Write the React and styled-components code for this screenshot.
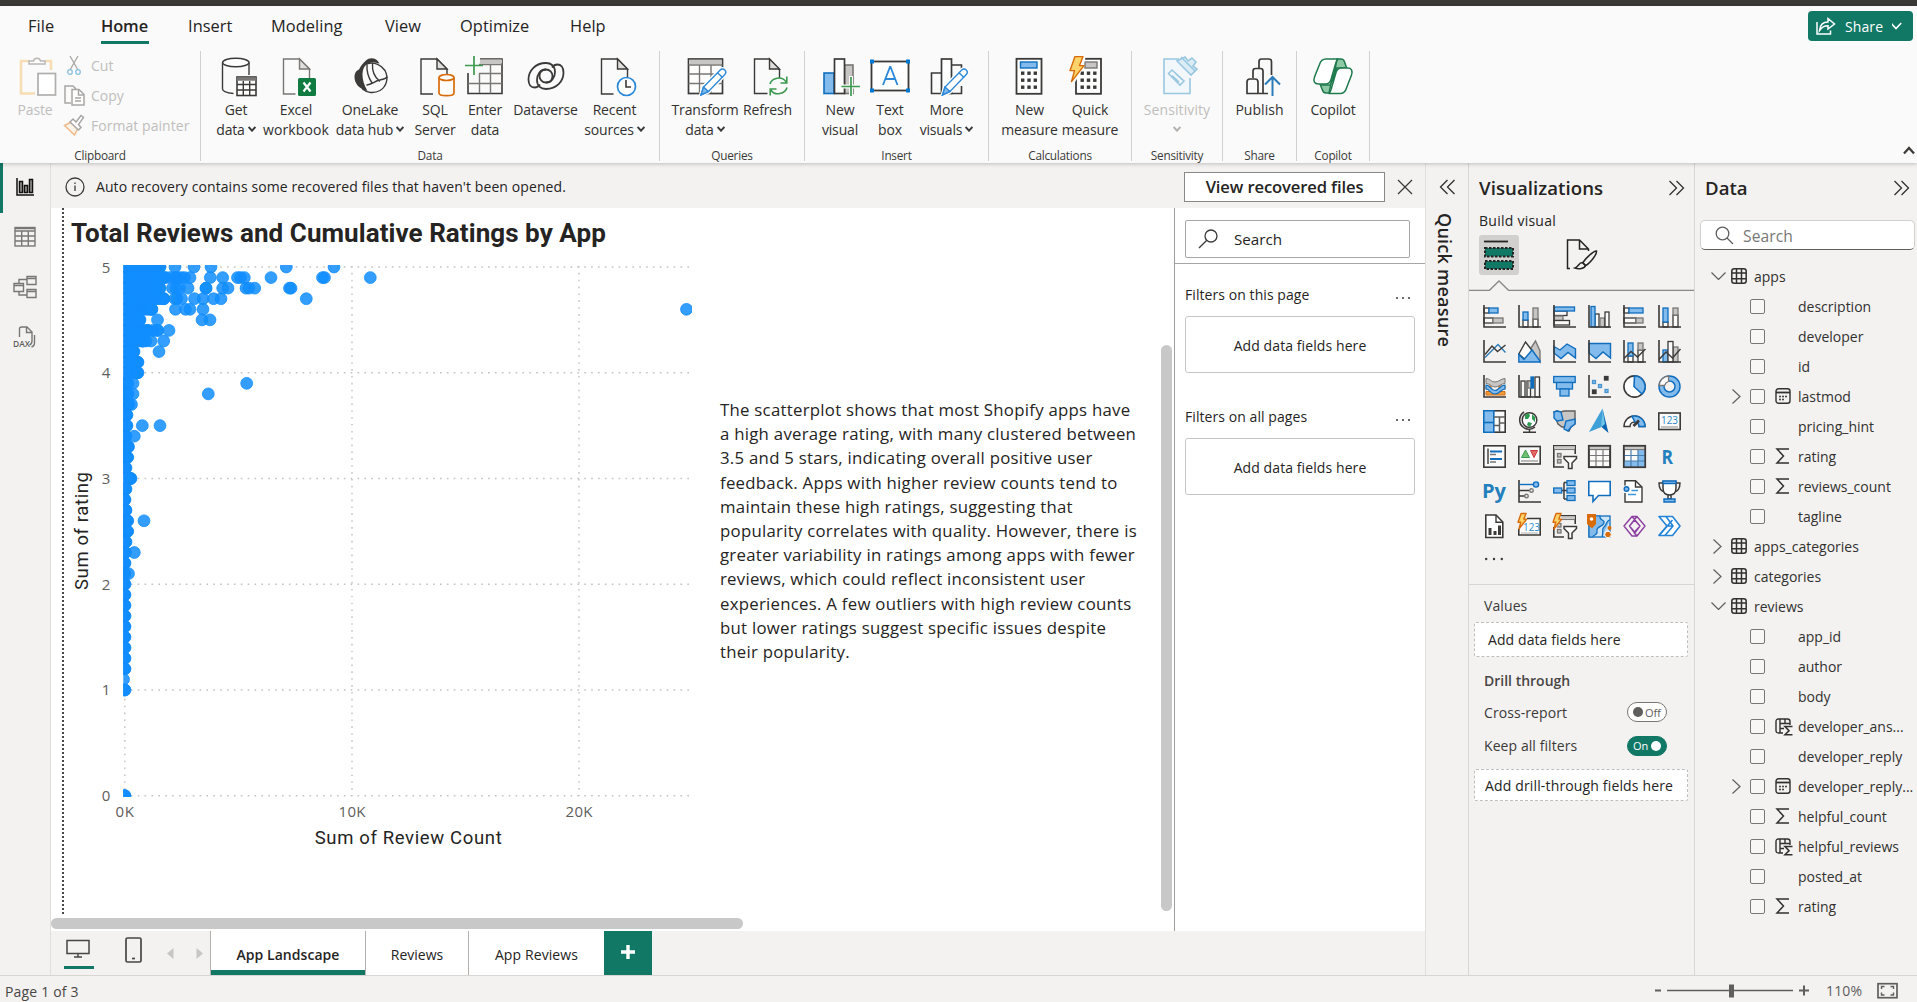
import React from "react";
import styled, { createGlobalStyle, css } from "styled-components";

const UI = `"Open Sans", "Noto Sans", sans-serif`;
const DIN = `Roboto, "Liberation Sans", sans-serif`;
const TEAL = "#117865";
const BG = "#f3f2f1";
const LINE = "#e1dfdd";
const INK = "#252423";
const D = "#3b3a39";
const M = "#797775";
const G = "#c8c6c4";
const W = "#fafafa";
const B = "#83bbec";
const S = "#106ebe";
const OR = "#d86b0a";
const GR = "#3d9a50";

const Global = createGlobalStyle`
  * { box-sizing: border-box; }
  html, body { margin: 0; height: 100%; overflow: hidden; }
  body { font-family: ${UI}; font-size: 14px; color: ${INK}; background: ${BG}; }
  button { font: inherit; color: inherit; background: none; border: 0; padding: 0; margin: 0; }
  svg { display: block; flex: none; }
`;

/* ---------- generic ---------- */

const Svg = ({ w, h, vb, children, ...rest }) => (
  <svg width={w} height={h || w} viewBox={vb || `0 0 ${w} ${h || w}`} fill="none" stroke={D} strokeWidth="1.4" {...rest}>
    {children}
  </svg>
);

const R = ({ x, y, w, h, f = W, s = D, sw = 1.3, rx }) => (
  <rect x={x} y={y} width={w} height={h} fill={f} stroke={s} strokeWidth={sw} rx={rx} />
);

const Text = styled.span`
  font-size: ${(p) => p.$size || 14}px;
  font-weight: ${(p) => p.$weight || 400};
  letter-spacing: ${(p) => p.$ls || 0}px;
  margin-left: ${(p) => p.$ml || 0}px;
  color: ${(p) => p.$color || INK};
  white-space: nowrap;
`;

const Page = styled.div`
  display: flex;
  flex-direction: column;
  height: 100vh;
  min-width: 1917px;
  background: ${BG};
`;

const TitleStrip = styled.div`
  height: 6px;
  flex: none;
  background: #3b3936;
`;

/* ---------- ribbon ---------- */

const Ribbon = styled.header`
  height: 157px;
  flex: none;
  background: #fafafa;
  box-shadow: 0 1px 4px rgba(0, 0, 0, 0.22);
  position: relative;
  z-index: 2;
`;

const MenuRow = styled.nav`
  display: flex;
  height: 45px;
  padding: 0 4px 0 28px;
`;

const MenuItem = styled.button`
  height: 38px;
  width: ${(p) => p.$w}px;
  margin-right: ${(p) => p.$gap}px;
  padding-top: 3px;
  font-size: 16.4px;
  letter-spacing: ${(p) => p.$ls || 0}px;
  font-weight: ${(p) => (p.$active ? 600 : 400)};
  white-space: nowrap;
  text-align: left;
  border-bottom: 3px solid ${(p) => (p.$active ? TEAL : "transparent")};
`;

const ShareButton = styled.button`
  display: flex;
  align-items: center;
  gap: 9px;
  margin: 5px 0 0 auto;
  width: 105px;
  height: 30px;
  padding-left: 8px;
  border-radius: 4px;
  background: ${TEAL};
  color: #fff;
`;

const GroupRow = styled.div`
  display: flex;
  height: 110px;
`;

const Group = styled.section`
  display: flex;
  flex-direction: column;
  width: ${(p) => p.$w}px;
  border-right: 1px solid #d2d0ce;
`;

const GroupBody = styled.div`
  display: flex;
  height: 94px;
  padding-left: ${(p) => p.$pad || 0}px;
  justify-content: ${(p) => (p.$center ? "center" : "flex-start")};
`;

const GroupLabel = styled.div`
  height: 16px;
  line-height: 20px;
  text-align: center;
  font-size: 11.8px;
  letter-spacing: -0.25px;
  color: #3b3a39;
`;

const BigButton = styled.button`
  display: flex;
  flex-direction: column;
  align-items: center;
  width: ${(p) => p.$w}px;
  padding-top: 5px;
`;

const BigLabel = styled.span`
  display: flex;
  align-items: center;
  justify-content: center;
  gap: 3px;
  height: 20px;
  font-size: 14px;
  letter-spacing: ${(p) => p.$ls ?? -0.15}px;
  color: ${(p) => (p.$off ? "#c0bebc" : "#323130")};
  white-space: nowrap;
`;

const SmallStack = styled.div`
  display: flex;
  flex-direction: column;
  margin-left: 7px;
`;

const SmallButton = styled.button`
  display: flex;
  align-items: center;
  gap: 5px;
  height: 30px;
  padding-bottom: 2px;
  font-size: 14px;
  letter-spacing: ${(p) => p.$ls || 0}px;
  color: #c0bebc;
  white-space: nowrap;
`;

const IconGap = styled.div`
  height: 3px;
  flex: none;
`;

const CollapseButton = styled.button`
  margin: 0 2px 6px auto;
  align-self: flex-end;
`;

const Caret = ({ c = D }) => (
  <Svg w={8} h={6} stroke={c} strokeWidth="1.9">
    <path d="M.6 1 4 4.7 7.4 1" />
  </Svg>
);

const Sheet = ({ x = 0, y = 0, w = 26, h = 35, c = D, cut }) => (
  <g stroke={c}>
    <path d={cut || `M${x + 12} ${y + h}H${x}V${y}h${w - 10}l10 10v14`} fill="none" />
    <path d={`M${x + w - 10} ${y}v10h10z`} fill="#e1dfdd" />
  </g>
);

const Pencil = ({ x = 0, y = 0 }) => (
  <g transform={`translate(${x} ${y})`}>
    <path d="M1 27l2.5-8L20 2.2c1.6-1.6 3.6-1.4 4.8-.2s1.4 3.2-.2 4.8L8.5 23.5z" fill="#fff" stroke="#fff" strokeWidth="4" />
    <path d="M1 27l2.5-8L20 2.2c1.6-1.6 3.6-1.4 4.8-.2s1.4 3.2-.2 4.8L8.5 23.5z" fill="#fff" stroke="#2b88d8" />
    <path d="M1 27l2.5-8 5 4.5z" fill="#83bbec" stroke="#2b88d8" />
    <path d="M17.5 4.8l5 4.8" stroke="#2b88d8" />
  </g>
);

const Bolt = ({ x = 0, y = 0, k = 1 }) => (
  <path transform={`translate(${x} ${y}) scale(${k})`} d="M5 0h8L9.5 9H14L1.5 25 4.5 14H0z" fill="#fcd36a" stroke={OR} strokeWidth={1.4 / k} strokeLinejoin="round" />
);

const Calc = ({ x = 0 }) => (
  <g>
    <rect x={x} y="2.8" width="25" height="35" stroke={D} strokeWidth="1.8" fill="#fff" />
    {[0, 1, 2].map((r) => [0, 1, 2].map((c) => (
      <rect key={`${r}${c}`} x={x + 4.5 + c * 6.3} y={15.5 + r * 7} width="3.4" height="3.4" fill={D} stroke="none" />
    )))}
  </g>
);

const RIB = {
  paste: (
    <g transform="translate(4 0)">
      <path d="M10 5H2v32.500h14M26 5h6v9" stroke="#f6ddb4" strokeWidth="2.600" />
      <path d="M10 8V5h4.500a3.600 3.600 0 0 1 7 0H26v3z" fill="#fff" stroke="#b8b6b4" />
      <rect x="19" y="17.500" width="17.500" height="21.500" stroke="#b0aeac" fill="#fff" strokeWidth="1.700" />
    </g>
  ),
  get: (
    <g>
      <path d="M6.500 6.500V33c0 2 4 3.800 11 4.500M33 6.500V19" />
      <ellipse cx="19.800" cy="6.500" rx="13.200" ry="4.300" fill="#fff" />
      <rect x="21" y="21" width="19" height="18.500" fill="#fff" strokeWidth="1.600" />
      <path d="M21 23h19" strokeWidth="3.500" stroke={M} />
      <path d="M21 28.500h19M21 34h19M27.300 25v14.500M33.700 25v14.500" />
    </g>
  ),
  excel: (
    <g>
      <Sheet x={7.5} y={3} c={M} />
      <rect x="22" y="22" width="18" height="18" rx="1.500" fill="#107c41" stroke="none" />
      <path d="M27.500 26.500l7 9M34.500 26.500l-7 9" stroke="#fff" strokeWidth="2.200" />
    </g>
  ),
  lake: (
    <g strokeLinecap="round">
      <path d="M16 4.500C20 .5 27 2 29.500 7.500c-5-1.500-8-1.500-11.500 0C11 11 10.500 23 17.500 35 9 33 4 27 4.500 20c.3-3.500 2-5.500 4.500-6.500C11 9.500 13 7 16 4.500z" fill={D} stroke="none" />
      <path d="M18 7.500c6.500-1.500 13.500 1.500 17 7 4 7.500 1.500 16-5 20-6 3.200-13 2.500-17.500-1.500" />
      <path d="M17 8c-.5 6.500 1 13 5 19M22.500 7.500c-.5 7 2 13.500 7 17.500M17 29c5-1 8-3.500 11-4.500s7-1 9-3.500" />
    </g>
  ),
  sql: (
    <g>
      <Sheet x={6} y={3} />
      <path d="M24 21.500v15.500c0 3.600 15 3.600 15 0V21.500" fill="#fff" stroke={OR} strokeWidth="1.700" />
      <ellipse cx="31.500" cy="21.500" rx="7.500" ry="3" fill="#fff" stroke={OR} strokeWidth="1.700" />
    </g>
  ),
  enter: (
    <g>
      <path d="M15 3h22v34.500H3V17" strokeWidth="1.600" />
      <path d="M15 5.500h22" stroke={G} strokeWidth="4" />
      <path d="M14 8.500h23M14 17.500h23M3 27.500h34M14.500 17v20M25.500 8.500v29" stroke={M} />
      <path d="M9 0v19M0 9.500h18" stroke={GR} strokeWidth="1.700" />
    </g>
  ),
  dataverse: (
    <g strokeWidth="1.800">
      <path d="M20 13.500c-4.500 0-6.500 3-6.500 6.500s2.800 6.500 6.500 6.500c6 0 9-6 9-10.500 0-6-4-9-9-9C9 7 2.500 15 2.500 23.500c0 5 2.500 8 6 8 3 0 4.500-1.500 5.500-3" />
      <path d="M20 26.500c4.500 0 6.500-3 6.500-6.500s-2.800-6.500-6.500-6.500c-6 0-9 5-9 10.500 0 6 4 9 9 9 11 0 17.500-8 17.500-16.500 0-5-2.500-8-6-8-3 0-4.500 1.500-5.500 3" />
    </g>
  ),
  recent: (
    <g>
      <Sheet x={6.5} y={3} />
      <circle cx="31.500" cy="30.500" r="9" fill="#fff" stroke="#2b88d8" strokeWidth="1.700" />
      <path d="M31 24v7h5" stroke={D} strokeWidth="1.600" />
    </g>
  ),
  transform: (
    <g>
      <rect x="3.500" y="3" width="34" height="34.500" strokeWidth="1.700" fill="#fff" />
      <path d="M4 6h33" stroke={G} strokeWidth="4.500" />
      <path d="M3.500 9h34M3.500 18h34M3.500 27.500h34M14.500 9v28M26 9v28" stroke={M} />
      <Pencil x={15} y={12} />
    </g>
  ),
  refresh: (
    <g>
      <Sheet x={6.5} y={3} w={25} h={34.5} cut="M19.500 37.500H6.500V3h15l10 11v8" />
      <path d="M22 28c1.500-6 12-9 16.500-1.500M38.800 20.500V27h-6.300M39 31.500c-1.500 6-12 9.500-16.500 2M22.200 39.500V33h6.300" stroke={GR} strokeWidth="1.600" />
    </g>
  ),
  newVisual: (
    <g>
      <rect x="4" y="17" width="10" height="20.500" fill={B} stroke={S} strokeWidth="1.600" />
      <rect x="24.500" y="9" width="8.500" height="28.500" fill={G} stroke={M} strokeWidth="1.600" />
      <rect x="14.500" y="3" width="10" height="34.500" fill="#fff" strokeWidth="1.700" />
      <path d="M31 20v20M21 30.500h19" stroke="#fafafa" strokeWidth="4" />
      <path d="M31 21v19M21.500 30.500H40" stroke={GR} strokeWidth="1.700" />
    </g>
  ),
  textBox: (
    <g>
      <rect x="1.500" y="5.500" width="37" height="29" fill="#fff" strokeWidth="1.800" />
      {[[0, 3.5], [36, 3.5], [0, 32.5], [36, 32.5]].map(([x, y]) => (
        <rect key={`${x}${y}`} x={x} y={y} width="4" height="4" fill="#0078d4" stroke="none" />
      ))}
      <path d="M13 29l7-18h.5l7 18M15.500 23h9.800" stroke="#2b88d8" strokeWidth="1.800" />
    </g>
  ),
  moreVisuals: (
    <g>
      <path d="M14 37.500H4.500V17H14M24.500 9h10V16M24.500 37.500h10V30" strokeWidth="1.600" />
      <rect x="14.500" y="3" width="10" height="34.500" fill="#fff" strokeWidth="1.700" />
      <Pencil x={14.5} y={12} />
    </g>
  ),
  measure: (
    <g>
      <Calc x={6.5} />
      <rect x="10.500" y="6" width="16.500" height="6" fill={B} stroke={S} />
    </g>
  ),
  quick: (
    <g>
      <Calc x={6} />
      <rect x="15" y="6" width="12" height="6" fill={G} stroke={M} />
      <path d="M4 0h12L12 14 4 28z" fill="#fafafa" stroke="none" />
      <Bolt x={0} y={0.6} />
    </g>
  ),
  sensitivity: (
    <g stroke="#3a96c8" strokeWidth="1.600">
      <path d="M22 3H7v34.500h26V22" fill="#eaf5fb" />
      <path d="M11.500 17.500l3.500-3.500 12 11-4 4zM15 19.500l7 6.500M18 17l7 6.500" />
      <path d="M20 5l14 14 6-6-4-3 3-4-4-4-4 3-3-4z" fill="#bfe0f0" />
      <path d="M24 1l14 14" />
    </g>
  ),
  publish: (
    <g strokeWidth="1.700">
      <path d="M7 37.500V26q0-3 3-3h5q3 0 3 3v11.500zM13 22v-7q0-2.500 2.500-2.500h5q2.500 0 2.500 2.500v22.500H18M19 12V5.500Q19 3 21.500 3h7.500q2.500 0 2.500 2.500V19M23 37.500h5" />
      <path d="M32.500 40V21M25 28.500l7.500-7.500 7.500 7.500" stroke="#2b7cb8" strokeWidth="2" />
    </g>
  ),
  copilot: (
    <g stroke="#1f7a4d" strokeWidth="1.500">
      <path d="M24 3h4c2 0 3 1 3.600 3l2 6h-10l-4 14z" fill="#8ec9a6" />
      <path d="M16 37h-3c-2 0-3-1-3.600-3l-2-5h10l3-12z" fill="#8ec9a6" />
      <path d="M25 3H13c-4 0-5.500 2-6.500 5.500L1.500 21c-1.500 4.500 0 7 4 7h7c3 0 4.500-1 5.500-4.500L22.500 8c.7-3 1.500-4.500 3-5z" fill="#fff" />
      <path d="M15.500 37.500H27c4 0 5.500-2 6.500-5.500L38.500 19c1.500-4.500 0-7-4-7h-6c-3 0-4.500 1-5.500 4.500L18.500 32c-.7 3-1.500 4.800-3 5.500z" fill="#fff" />
    </g>
  ),
};

const RibbonButton = ({ w, icon, l1, l2, ls1, ls2, caret, off, fade = 1 }) => (
  <BigButton $w={w}>
    <Svg w={40} overflow="visible" opacity={fade}>{RIB[icon]}</Svg>
    <IconGap />
    <BigLabel $ls={ls1} $off={off}>{l1}</BigLabel>
    <BigLabel $ls={ls2} $off={off}>
      {l2}
      {caret && <Caret c={off ? "#b3b0ad" : D} />}
    </BigLabel>
  </BigButton>
);

const GROUPS = [
  { label: "Data", w: 459, pad: 10, items: [
    { w: 50, icon: "get", l1: "Get", l2: "data", caret: true },
    { w: 70, icon: "excel", l1: "Excel", l2: "workbook", ls2: 0.08 },
    { w: 78, icon: "lake", l1: "OneLake", l2: "data hub", caret: true },
    { w: 52, icon: "sql", l1: "SQL", l2: "Server" },
    { w: 48, icon: "enter", l1: "Enter", l2: "data" },
    { w: 73, icon: "dataverse", l1: "Dataverse", l2: "" },
    { w: 65, icon: "recent", l1: "Recent", l2: "sources", caret: true },
  ] },
  { label: "Queries", w: 145, pad: 10, items: [
    { w: 70, icon: "transform", l1: "Transform", l2: "data", caret: true },
    { w: 55, icon: "refresh", l1: "Refresh", l2: "" },
  ] },
  { label: "Insert", w: 184, pad: 12, items: [
    { w: 46, icon: "newVisual", l1: "New", l2: "visual" },
    { w: 54, icon: "textBox", l1: "Text", l2: "box" },
    { w: 59, icon: "moreVisuals", l1: "More", l2: "visuals", caret: true },
  ] },
  { label: "Calculations", w: 143, pad: 10, items: [
    { w: 61, icon: "measure", l1: "New", l2: "measure" },
    { w: 60, icon: "quick", l1: "Quick", l2: "measure" },
  ] },
  { label: "Sensitivity", w: 91, center: true, items: [{ w: 90, icon: "sensitivity", l1: "Sensitivity", l2: "", ls1: 0.1, caret: true, off: true, fade: 0.5 }] },
  { label: "Share", w: 74, center: true, items: [{ w: 70, icon: "publish", l1: "Publish", l2: "", ls1: 0.05 }] },
  { label: "Copilot", w: 73, center: true, items: [{ w: 70, icon: "copilot", l1: "Copilot", l2: "" }] },
];

const MENU = [
  ["File", 73, 0],
  ["Home", 48, 39],
  ["Insert", 83, 0],
  ["Modeling", 114, 0],
  ["View", 75, 0],
  ["Optimize", 110, 0],
  ["Help", 60, 0],
];

function RibbonBar() {
  return (
    <Ribbon>
      <MenuRow>
        {MENU.map(([t, w, gap]) => (
          <MenuItem key={t} $w={w} $gap={gap} $active={t === "Home"} $ls={t === "Home" ? -0.1 : 0.05}>{t}</MenuItem>
        ))}
        <ShareButton>
          <Svg w={20} h={20} stroke="#fff" strokeWidth="1.500">
            <path d="M1 6v12h13.500v-3.500M3.500 14.500C4 8.500 7.500 6 12 6V2.500L18.500 8 12 13V9.800c-3.500 0-6 1-8.500 4.700z" />
          </Svg>
          <Text $size={14} $color="#fff" $ls={0.1}>Share</Text>
          <Svg w={12} h={8} stroke="#fff" strokeWidth="1.600"><path d="M-1.200 1 4 6.500 9.200 1" /></Svg>
        </ShareButton>
      </MenuRow>
      <GroupRow>
        <Group $w={201}>
          <GroupBody $pad={15}>
            <RibbonButton w={40} icon="paste" l1="Paste" l2="" off />
            <SmallStack>
              <SmallButton>
                <Svg w={24} stroke="#a9a7a5" strokeWidth="1.300">
                  <path d="M8 3l8 14M16 3L8 17" />
                  <circle cx="8" cy="19" r="2.300" stroke="#8bbfe0" /><circle cx="16" cy="19" r="2.300" stroke="#8bbfe0" />
                </Svg>
                Cut
              </SmallButton>
              <SmallButton>
                <Svg w={24} stroke="#a9a7a5" strokeWidth="1.500">
                  <path d="M9 20H3V3h8l3 3" />
                  <path d="M10 6.500h7l5 5V22H10z" fill="#fff" /><path d="M16.500 7v5H22M13 15h6M13 18h6" />
                </Svg>
                Copy
              </SmallButton>
              <SmallButton $ls={0.05}>
                <Svg w={24} stroke="#a9a7a5" strokeWidth="1.500">
                  <path d="M2.500 12.500l7-3.500 6 7-3 6z" stroke="#f0b98a" fill="#fdf3e6" />
                  <path d="M8 9l3-3 3 3 5-6.500 2.500 2-5 7 2.500 3-2.500 2.500z" fill="#fff" />
                </Svg>
                Format painter
              </SmallButton>
            </SmallStack>
          </GroupBody>
          <GroupLabel>Clipboard</GroupLabel>
        </Group>
        {GROUPS.map((g) => (
          <Group key={g.label} $w={g.w}>
            <GroupBody $pad={g.pad} $center={g.center}>
              {g.items.map((b) => <RibbonButton key={b.icon} {...b} />)}
            </GroupBody>
            <GroupLabel>{g.label}</GroupLabel>
          </Group>
        ))}
        <CollapseButton>
          <Svg w={12} h={9} stroke={D} strokeWidth="2.200"><path d="M1 7.500 6 2l5 5.500" /></Svg>
        </CollapseButton>
      </GroupRow>
    </Ribbon>
  );
}

/* ---------- main area ---------- */

const Main = styled.div`
  display: flex;
  height: 812px;
  flex: none;
`;

const Rail = styled.aside`
  width: 51px;
  flex: none;
  border-right: 1px solid ${LINE};
`;

const RailItem = styled.button`
  display: flex;
  align-items: center;
  justify-content: center;
  width: 50px;
  height: 50px;
  padding-right: ${(p) => (p.$active ? 3 : 0)}px;
  border-left: ${(p) => (p.$active ? `3px solid ${TEAL}` : "0")};
  padding-bottom: 2px;
`;

function ViewRail() {
  return (
    <Rail>
      <RailItem $active>
        <Svg w={20} stroke="#111" strokeWidth="1.500">
          <path d="M2 1v17h17" /><path d="M4.500 4.500h3v11h-3zM9.500 8.500h3v7h-3zM14.500 2.500h3v13h-3z" fill="#a19f9d" />
        </Svg>
      </RailItem>
      <RailItem>
        <Svg w={22} stroke={M} strokeWidth="1.400">
          <rect x="1" y="1.500" width="20" height="18.500" /><path d="M1 5h20M1 10h20M1 15h20M7.700 5v15M14.300 5v15M1 2.500h20" />
        </Svg>
      </RailItem>
      <RailItem>
        <Svg w={24} stroke={M} strokeWidth="1.400">
          <path d="M1 8.500h9.500v8H1zM1 10.500h9.500M14 1.500h9v8h-9zM14 3.500h9M14 14.500h9v8h-9zM14 16.500h9M6 8.500V4.500h8M6 16.500v3.500h8" />
        </Svg>
      </RailItem>
      <RailItem>
        <Svg w={24} stroke={M} strokeWidth="1.400">
          <path d="M6.500 12V4q0-2 2-2H14l5 5v9q0 3-2.500 4M13.500 2v5.500H19M21.500 10v8q0 3-3 4" />
          <text x="0" y="21.500" fontSize="8.500" fontWeight="600" fontFamily={UI} fill="#605e5c" stroke="none" textLength="17" lengthAdjust="spacingAndGlyphs">DAX</text>
        </Svg>
      </RailItem>
    </Rail>
  );
}

const Center = styled.main`
  display: flex;
  flex-direction: column;
  width: 1375px;
  flex: none;
  border-right: 1px solid ${LINE};
`;

const InfoBar = styled.div`
  display: flex;
  align-items: center;
  height: 45px;
  padding: 2px 12px 0 14px;
  flex: none;
`;

const OutlineButton = styled.button`
  width: 201px;
  height: 30px;
  margin-left: auto;
  margin-right: 12px;
  background: #fff;
  border: 1px solid #8a8886;
  font-size: 16.6px;
  font-weight: 600;
  letter-spacing: -0.12px;
  color: ${INK};
`;

const Work = styled.div`
  display: flex;
  height: 723px;
  background: #fff;
`;

const Canvas = styled.div`
  display: flex;
  position: relative;
  width: 1123px;
  flex: none;
  padding-left: 11px;
`;

const PageEdge = styled.div`
  width: 2px;
  height: 708px;
  background: repeating-linear-gradient(to bottom, #4a4846 0 2px, #fff 2px 4px);
`;

const ScatterVisual = styled.figure`
  margin: 0;
  width: 636px;
`;

const ChartTitle = styled.h2`
  margin: 0;
  height: 48px;
  padding: 8px 0 0 7px;
  font: 700 26px/34px ${DIN};
  letter-spacing: 0.06px;
  color: ${INK};
  white-space: nowrap;
`;

const Narrative = styled.p`
  margin: 190px 0 0 20px;
  width: 430px;
  font-size: 16.8px;
  line-height: 24.2px;
  letter-spacing: 0.26px;
  color: ${INK};
  white-space: pre;
`;

const ScrollThumb = styled.div`
  position: absolute;
  background: #c8c8c8;
  border-radius: 6px;
  ${(p) => p.$vertical
    ? css`right: 2px; top: 137px; width: 11px; height: 566px;`
    : css`left: 0; bottom: 2px; height: 11px; width: 692px;`}
`;

/* rows of the scatter plot: rating, right end of the dense run, single points */
const ROWS = [
  [5, 160, [175, 194, 211, 286.3, 334]],
  [4.9, 165, [170, 175, 177, 181, 184.5, 190, 210.3, 222.7, 237.5, 240.5, 244.3, 271, 322.5, 324.5, 370.3]],
  [4.8, 160, [172.5, 176, 179.5, 188, 206, 206, 222.7, 228, 246, 249, 254.7, 289.5, 291]],
  [4.7, 164, [175, 177, 181.5, 194.5, 203, 213.5, 221, 306.3]],
  [4.6, 152, [175.5, 185.5, 190, 203, 686.5]],
  [4.5, 140, [157.5, 202, 210]],
  [4.4, 148, [153, 157, 158, 169]],
  [4.3, 143, [146, 151, 163.7]],
  [4.2, 134, [159]],
  [4.1, 138, []],
  [4, 138, []],
  [3.9, 128, [133, 246.7]],
  [3.8, 128, [133, 208.3]],
  [3.7, 129, [131.5]],
  [3.6, 127, []],
  [3.5, 127, [142.3, 160]],
  [3.4, 126, [134.3]],
  [3.3, 128.5, []],
  [3.2, 127.7, []],
  [3.1, 126, []],
  [3, 131, []],
  [2.9, 126, []],
  [2.8, 125, []],
  [2.7, 126, []],
  [2.6, 127.7, [144]],
  [2.5, 127.7, []],
  [2.4, 126, []],
  [2.3, 125.5, [134.3]],
  [2.2, 125, []],
  [2.1, 125, [128.5]],
  [2, 125, []], [1.9, 125, []], [1.8, 125, []], [1.7, 125, []], [1.6, 125, []],
  [1.5, 125, []], [1.4, 125, []], [1.3, 125, []], [1.2, 125, []],
  [1.1, 0, [123.5]],
  [1, 125, []],
  [0, 125, []],
];

const yOf = (v) => 795.7 - v * 105.74;
const POINTS = ROWS.flatMap(([v, end, singles]) => {
  const run = [];
  for (let x = 124; x < end; x += 3) run.push([x, yOf(v)]);
  if (end) run.push([end, yOf(v)], [end - 0.5, yOf(v)]);
  return [...run, ...singles.map((x) => [x, yOf(v)])];
});

function Scatter() {
  return (
    <svg width="636" height="604" viewBox="64 256 636 604" fontFamily={UI}>
      <g stroke="#c4c2c0" strokeWidth="1.400" strokeDasharray="1.600 5.270">
        {[0, 1, 2, 3, 4, 5].map((v) => <line key={v} x1="124" x2="690" y1={yOf(v)} y2={yOf(v)} />)}
        {[124.8, 352, 579].map((x) => <line key={x} y1="266" y2="796" x1={x} x2={x} />)}
      </g>
      <clipPath id="plot"><rect x="123.300" y="265" width="568.700" height="532" /></clipPath>
      <g clipPath="url(#plot)" fill="#118dff" fillOpacity="0.850" stroke="#118dff" strokeWidth="0.800">
        {POINTS.map(([x, y], i) => <circle key={i} cx={x} cy={y} r="5.900" />)}
      </g>
      <g fontSize="15" fill="#605e5c" textAnchor="middle">
        {[0, 1, 2, 3, 4, 5].map((v) => <text key={v} x="106" y={yOf(v) + 5.5}>{v}</text>)}
        <text x="124.800" y="817" textLength="18.500">0K</text>
        <text x="352" y="817" textLength="27">10K</text>
        <text x="579" y="817" textLength="27">20K</text>
      </g>
      <g fontFamily={DIN} fontSize="18.500" fill={INK}>
        <text x="314.700" y="843.800" textLength="187">Sum of Review Count</text>
        <text transform="translate(88 590) rotate(-90)" textLength="118">Sum of rating</text>
      </g>
    </svg>
  );
}

/* ---------- filters ---------- */

const FilterPane = styled.aside`
  flex: 1;
  border-left: 1px solid #a19f9d;
  background: #fff;
`;

const FilterSearchRow = styled.div`
  height: 56px;
  padding: 12px 15px 0 10px;
  border-bottom: 1px solid #a8a6a4;
`;

const SearchInput = styled.div`
  display: flex;
  align-items: center;
  gap: 16px;
  height: 38px;
  padding-left: 12px;
  border: 1px solid #a8a6a4;
  border-radius: 2px;
`;

const FilterSection = styled.section`
  padding: ${(p) => p.$top}px 10px 0;
`;

const FilterHead = styled.div`
  display: flex;
  align-items: center;
  justify-content: space-between;
  height: 22px;
  padding-right: 5px;
`;

const DotsDrop = styled.span`
  padding-top: 8px;
`;

const DropWell = styled.div`
  display: flex;
  align-items: center;
  justify-content: center;
  height: 57px;
  margin-top: 11px;
  padding-top: 2px;
  border: 1px solid #c8c6c4;
  border-radius: 3px;
  background: #fff;
`;

const Dots = ({ w = 14, r = 1 }) => (
  <Svg w={w} h={4} stroke="none" fill="#3b3a39">
    <circle cx={r} cy="2" r={r} /><circle cx={w / 2} cy="2" r={r} /><circle cx={w - r} cy="2" r={r} />
  </Svg>
);

function Filters() {
  return (
    <FilterPane>
      <FilterSearchRow>
        <SearchInput>
          <Svg w={20} stroke={D} strokeWidth="1.300"><circle cx="13" cy="7" r="6" /><path d="M8.800 11.200 1 19" /></Svg>
          <Text $size={15.2}>Search</Text>
        </SearchInput>
      </FilterSearchRow>
      {["Filters on this page", "Filters on all pages"].map((t, i) => (
        <FilterSection key={t} $top={i ? 32 : 19}>
          <FilterHead><Text $ls={0.07}>{t}</Text><DotsDrop><Dots /></DotsDrop></FilterHead>
          <DropWell><Text $ls={0.09}>Add data fields here</Text></DropWell>
        </FilterSection>
      ))}
    </FilterPane>
  );
}

/* ---------- page tabs ---------- */

const TabBar = styled.div`
  display: flex;
  height: 44px;
  flex: none;
  background: ${BG};
`;

const DeviceButton = styled.button`
  display: flex;
  flex-direction: column;
  align-items: center;
  width: 30px;
  margin-left: ${(p) => p.$ml}px;
  height: 38px;
  padding: ${(p) => p.$pt}px 2px 0 0;
  border-bottom: 3px solid ${(p) => (p.$active ? TEAL : "transparent")};
`;

const PagerArrows = styled.div`
  display: flex;
  align-items: center;
  gap: 22px;
  width: 61px;
  padding-left: 18px;
`;

const PageTab = styled.button`
  width: ${(p) => p.$w}px;
  background: #fff;
  border-left: 1px solid #b3b0ad;
  box-shadow: ${(p) => (p.$active ? `inset 0 -5px ${TEAL}` : "none")};
  font-size: 14px;
  padding-top: 2px;
  font-weight: ${(p) => (p.$active ? 600 : 400)};
  letter-spacing: ${(p) => p.$ls || 0}px;
  white-space: nowrap;
`;

const AddPage = styled.button`
  display: flex;
  align-items: center;
  justify-content: center;
  width: 48px;
  padding-bottom: 2px;
  background: ${TEAL};
`;

function PageTabs() {
  return (
    <TabBar>
      <DeviceButton $ml={13} $pt={8} $active>
        <Svg w={24} h={19} stroke="#484644" strokeWidth="1.500"><path d="M1 1.500h22v13H1zM12 14.500V18M8 18h8" /></Svg>
      </DeviceButton>
      <DeviceButton $ml={25} $pt={6}>
        <Svg w={17} h={26} stroke="#484644" strokeWidth="1.700"><rect x="1" y="1" width="15" height="24" rx="1.500" /><path d="M7 21.500h3" /></Svg>
      </DeviceButton>
      <PagerArrows>
        <Svg w={7} h={11} stroke="none" fill={G}><path d="M6.500 0v11L0 5.500z" /></Svg>
        <Svg w={7} h={11} stroke="none" fill={G}><path d="M.5 0v11L7 5.500z" /></Svg>
      </PagerArrows>
      <PageTab $w={155} $active $ls={0.05}>App Landscape</PageTab>
      <PageTab $w={103}>Reviews</PageTab>
      <PageTab $w={136} $ls={0.1}>App Reviews</PageTab>
      <AddPage><Svg w={14} stroke="#fff" strokeWidth="3.400"><path d="M7 0v14M0 7h14" /></Svg></AddPage>
    </TabBar>
  );
}

/* ---------- side panels ---------- */

const Collapsed = styled.aside`
  display: flex;
  flex-direction: column;
  align-items: center;
  width: 42px;
  flex: none;
  padding-top: 16px;
`;

const VerticalTitle = styled.span`
  writing-mode: vertical-rl;
  margin: 18px 4px 0 0;
  font-size: 18px;
  font-weight: 600;
  letter-spacing: 0.25px;
  line-height: 24px;
  color: ${INK};
  white-space: nowrap;
`;

const Panel = styled.aside`
  width: ${(p) => p.$w}px;
  flex: none;
  border-left: 1px solid #d8d6d4;
`;

const PanelHead = styled.div`
  display: flex;
  align-items: center;
  justify-content: space-between;
  height: 46px;
  padding: 3px ${(p) => p.$r}px 0 10px;
`;

const Chevrons = ({ left }) => (
  <Svg w={16} h={16} stroke="#323130" strokeWidth="1.300">
    <path d={left ? "M8.500 1 1.500 8l7 7M15.500 1l-7 7 7 7" : "M.500 1l7 7-7 7M7.500 1l7 7-7 7"} />
  </Svg>
);

const SubTitle = styled.div`
  height: 24px;
  line-height: 24px;
  padding-left: 10px;
`;

const ModeRow = styled.div`
  display: flex;
  height: 42px;
  padding: 2px 0 0 10px;
  gap: 43px;
`;

const ModeButton = styled.button`
  display: flex;
  align-items: center;
  justify-content: center;
  width: 40px;
  height: 40px;
  border-radius: 3px;
  background: ${(p) => (p.$active ? "#d2d0ce" : "none")};
`;

const IconGrid = styled.div`
  display: grid;
  grid-template-columns: repeat(6, 23px);
  grid-auto-rows: 23px;
  gap: 12px;
  padding: 14px 0 0 14px;
`;

const MoreRow = styled.div`
  padding: 19px 0 23px 16px;
  border-bottom: 1px solid #d8d6d4;
`;

const WellLabel = styled.div`
  display: flex;
  align-items: center;
  justify-content: space-between;
  height: ${(p) => p.$h}px;
  margin-top: ${(p) => p.$mt || 0}px;
  padding: ${(p) => p.$pt || 0}px 27px 0 15px;
`;

const DashedWell = styled.div`
  display: flex;
  align-items: center;
  height: ${(p) => p.$h}px;
  margin: ${(p) => p.$mt || 0}px 6px 0 5px;
  padding-left: ${(p) => p.$pl}px;
  border: 1px dashed #c0bebc;
  border-radius: 2px;
  background: #fff;
`;

const Toggle = styled.span`
  display: flex;
  align-items: center;
  justify-content: space-between;
  flex-direction: ${(p) => (p.$on ? "row-reverse" : "row")};
  width: 40px;
  height: 20px;
  padding: 0 5px;
  border-radius: 10px;
  border: 1px solid ${(p) => (p.$on ? TEAL : M)};
  background: ${(p) => (p.$on ? TEAL : "#fff")};
`;

const Knob = styled.i`
  width: 10px;
  height: 10px;
  border-radius: 50%;
  background: ${(p) => (p.$on ? "#fff" : "#605e5c")};
`;

const Axis = () => <path d="M1 0V22H23" stroke={D} strokeWidth="1.600" />;
const MiniTable = ({ blue }) => (
  <g>
    <R x={0.8} y={0.8} w={21.4} h={21.4} sw={1.7} />
    {blue && <path d="M15 5h7v17H1v-6h14z" fill={B} stroke="none" />}
    <path d="M1 2.500h21" stroke={G} strokeWidth="2.600" />
    <path d="M1 4.500h21" stroke={M} strokeWidth="1.200" />
    <path d="M1 10.500h21M1 16h21M8 4.500V22M15 4.500V22" stroke={blue ? "#4a7fae" : M} strokeWidth="1.200" />
    <rect x=".8" y=".8" width="21.400" height="21.400" strokeWidth="1.700" />
  </g>
);
const Funnel = ({ x = 11, y = 11 }) => (
  <path transform={`translate(${x} ${y})`} d="M0 .500h12.500v2L8 7v5.500H4.500V7L0 2.500z" fill="#fff" stroke={D} strokeWidth="1.500" />
);
const SlicerBase = () => (
  <g>
    <path d="M11 22H.800V.800h21.400V9" fill="none" strokeWidth="1.600" />
    <path d="M1 2.500h21" stroke={G} strokeWidth="2.400" /><path d="M1 4.500h21" stroke={M} strokeWidth="1.100" />
    <R x={4.5} y={8.5} w={3.5} h={3.5} f={G} s={M} /><R x={4.5} y={14.5} w={3.5} h={3.5} f={G} s={M} />
    <Funnel />
  </g>
);
const Num = ({ x, y, size = 10 }) => (
  <text x={x} y={y} fontSize={size} fontFamily={UI} fill="#2b88c8" stroke="none" textLength="17" lengthAdjust="spacingAndGlyphs">123</text>
);

const VIZ = [
  <g><R x={1} y={3} w={5} h={5} /><R x={6} y={3} w={9} h={5} f={B} s={S} /><R x={1} y={13} w={9} h={5} /><R x={10} y={13} w={10} h={5} f={G} s={M} /><Axis /></g>,
  <g><R x={5} y={15} w={5} h={7} /><R x={5} y={7} w={5} h={8} f={B} s={S} /><R x={15} y={14} w={5} h={8} /><R x={15} y={3} w={5} h={11} f={G} s={M} /><Axis /></g>,
  <g><R x={1} y={6} w={13} h={4.5} /><R x={1} y={2} w={20.5} h={4} f={B} s={S} /><R x={1} y={11} w={9} h={4.5} f={G} s={M} /><R x={1} y={15.5} w={15.5} h={4.5} /><Axis /></g>,
  <g><R x={7} y={9} w={4} h={13} /><R x={3} y={1.5} w={4} h={20.5} f={B} s={S} /><R x={12} y={13} w={4.5} h={9} f={G} s={M} /><R x={17} y={7} w={4} h={15} /><Axis /></g>,
  <g><R x={1} y={3} w={5} h={5} /><R x={6} y={3} w={14} h={5} f={B} s={S} /><R x={1} y={13} w={12} h={5} /><R x={13} y={13} w={7} h={5} f={G} s={M} /><Axis /></g>,
  <g><R x={5} y={17} w={5} h={5} /><R x={5} y={3} w={5} h={14} f={B} s={S} /><R x={15} y={10} w={5} h={12} /><R x={15} y={3} w={5} h={7} f={G} s={M} /><Axis /></g>,
  <g><path d="M2 17.500 15 4.500l7.500 8" stroke="#2b7cb8" /><path d="M2 14.500 9 6l5.500 5.500L22.500 5" /><Axis /></g>,
  <g><path d="M11 11 17.500 1 22 11v11z" fill={G} stroke={M} /><path d="M.800 14 7.500 2l7 9-8 8z" fill="#fff" /><path d="M.800 14.500 6 19.500 14 10l8 11v1H.800z" fill={B} stroke={S} /></g>,
  <g><path d="M1 6.500 7 10l7-6 8.500 5v9L15 12.500 8 18.500 1 13z" fill={B} stroke={S} /><Axis /></g>,
  <g><path d="M1 3.500h21.500V18L15 12 8 18.500 1 13z" fill={B} stroke={S} /><Axis /></g>,
  <g><R x={5} y={16} w={5} h={6} /><R x={5} y={3} w={5} h={13} f={B} s={S} /><R x={15} y={10} w={5} h={12} /><R x={15} y={3} w={5} h={7} f={G} s={M} /><path d="M1 18.500 8 11.500l6.500 5.500 8-8" /><Axis /></g>,
  <g><R x={5} y={10} w={5} h={12} f={B} s={S} /><R x={15} y={7} w={5} h={15} f={G} s={M} /><R x={10} y={1.5} w={5} h={20.5} /><path d="M1 19.500 8 12l6.500 6 8-9" /><Axis /></g>,
  <g><path d="M3 11h5v3H3zM16 11h6v3h-6zM3 16.500h19V20H3z" fill="#f39b3c" stroke={OR} strokeWidth="1" /><path d="M3 3.500c4 0 5 3.500 9 3.500s6-3.500 10-3.500v5c-4 0-6 3.500-10 3.500S7 8.500 3 8.500z" fill={G} stroke={M} strokeWidth="1" /><path d="M3 10c4 0 5 5.500 9 5.500s5-5.500 10-5.500v4c-4 0-5 5-10 5s-5-5-9-5z" fill={B} stroke={S} strokeWidth="1.200" /><Axis /></g>,
  <g><R x={3} y={6} w={4} h={16} /><R x={9} y={6} w={3.5} h={16} /><R x={10} y={6} w={4} h={7} f={G} s={M} /><R x={13} y={2} w={2.5} h={11} f={S} s={S} /><R x={17} y={2} w={4.5} h={20} /><Axis /></g>,
  <g><R x={0.7} y={1.5} w={21.5} h={6} f={B} s={S} /><R x={3.5} y={7.5} w={16} h={6.5} f={B} s={S} /><R x={7} y={14} w={9} h={7} f={B} s={S} /></g>,
  <g><R x={16.5} y={1.5} w={3.5} h={3.5} f={D} /><R x={4.5} y={5.5} w={3} h={3} f={B} s="#4a94d0" /><R x={10.5} y={9.5} w={3} h={3} f={B} s="#4a94d0" /><R x={17} y={14.5} w={3} h={3} f={B} s="#4a94d0" /><R x={4.5} y={15} w={3.5} h={3.5} f={D} /><Axis /></g>,
  <g><circle cx="11.500" cy="11.500" r="10.600" fill="#fff" strokeWidth="1.600" /><path d="M11.500 1a10.600 10.600 0 0 1 7.500 18l-8-7.500z" fill={B} stroke={S} strokeWidth="1.600" /></g>,
  <g><circle cx="11.500" cy="11.500" r="8" stroke={S} strokeWidth="6.500" /><circle cx="11.500" cy="11.500" r="8" stroke={B} strokeWidth="3.600" /><path d="M1 10.500A10.500 10.500 0 0 1 10.500 1v5.500a6 6 0 0 0-4 4z" fill="#fff" stroke={M} strokeWidth="1.300" /></g>,
  <g><R x={0.8} y={0.8} w={21.4} h={21.4} sw={1.6} /><path d="M.800.800h10v21.400H.800z" fill={B} stroke={S} strokeWidth="1.600" /><path d="M1 12.500h10" stroke={S} strokeWidth="1.600" /><path d="M11 7h11M11 15.500h5.500M16.500 7v15M16.500 13H22" strokeWidth="1.500" stroke="#605e5c" /></g>,
  <g><circle cx="11.500" cy="10" r="7.300" fill="#fff" strokeWidth="1.500" /><path d="M7 5l4-2 1 3-2 3-3 0zM14 4l3 3v5l-3-3zM10 12l4 1-2 4-3-2z" fill="#2e9a50" stroke="none" /><path d="M6 2C1 5 0 13 5 17c4 3.500 9 2.500 12 0M11.500 19v3M5 22.200h13" strokeWidth="1.500" /></g>,
  <g><path d="M1 2l3-1 4 1 3-1h11v13l-4 3-2 4-4-4H9l-4-3-2-5z" fill={G} stroke="#605e5c" strokeWidth="1.400" /><path d="M1 2l3-1 4 1 2 8-6 1-3-3zM22 9v5l-4 3-3 4-4-2 2-8z" fill={B} stroke={S} strokeWidth="1.400" /></g>,
  <g stroke="none"><path d="M14.500-1.500 20.500 23l-7-6z" fill="#0a63b0" /><path d="M14.500-1.500 13.500 17 1 22z" fill="#3fa0d8" /><path d="M14.500-1.500 17 14l-3.500 3z" fill="#6cc5e8" /></g>,
  <g><path d="M1 16.500a10.500 10.500 0 0 1 21 0h-6a4.500 4.500 0 0 0-9 0z" fill="#fff" strokeWidth="1.500" /><path d="M9 6.300a10.500 10.500 0 0 1 13 10.200h-6a4.500 4.500 0 0 0-4-4.500z" fill={B} stroke={S} strokeWidth="1.500" /><path d="M10.500 16 16 10.500" strokeWidth="2.600" /></g>,
  <g><R x={0.8} y={3} w={21.4} h={16.5} sw={1.6} /><Num x={3} y={14} /><path d="M3 17h17" stroke="#a19f9d" strokeWidth="1.200" /></g>,
  <g><R x={0.8} y={0.8} w={21.4} h={21.4} sw={1.6} /><path d="M5 3.500v15.500" strokeWidth="1.400" /><path d="M7 6.500h12M7 14h12" stroke={S} strokeWidth="2" /><path d="M7 9.500h6M7 17h6" stroke={M} strokeWidth="1.500" /></g>,
  <g><R x={0.8} y={1.5} w={21.4} h={17.5} sw={1.6} /><path d="M3.500 12.500 7.500 5l4 7.500z" fill="#6fbf73" stroke={GR} strokeWidth="1" /><path d="M12.500 5.500h7L16 12.500z" fill="#e06a6a" stroke="#d13438" strokeWidth="1" /><path d="M3 16h17" stroke="#a19f9d" strokeWidth="1.400" /></g>,
  <SlicerBase />,
  <MiniTable />,
  <MiniTable blue />,
  <text x="3.500" y="18.500" fontSize="19.500" fontWeight="700" fontFamily={UI} fill="#2380bd" stroke="none" textLength="11.500" lengthAdjust="spacingAndGlyphs">R</text>,
  <text x="-1" y="17.500" fontSize="20" fontWeight="700" fontFamily={UI} fill="#2380bd" stroke="none" textLength="24" lengthAdjust="spacingAndGlyphs">Py</text>,
  <g><Axis /><path d="M1 4.500h14" stroke={S} /><circle cx="18" cy="4.500" r="2.600" fill={B} stroke={S} /><path d="M1 10.500h10M1 16h6" stroke={D} /><circle cx="13.500" cy="10.500" r="1.800" stroke={M} /><circle cx="8.500" cy="16" r="1.800" stroke={M} /></g>,
  <g><path d="M8 10.500h6M11 2.500V19M11 2.500h3M11 19h3" strokeWidth="1.500" /><R x={0.7} y={8} w={8} h={5} f={B} s={S} /><R x={14} y={0.7} w={8} h={4.8} f={B} s={S} /><R x={14} y={8} w={8} h={5} f={B} s={S} /><R x={14} y={15.5} w={8} h={5} f={B} s={S} /></g>,
  <path d="M.800 1.500h21.400v14H10.500L5 21.500v-6H.800z" fill="#fff" stroke={S} strokeWidth="1.600" />,
  <g><path d="M2 5.500V.800h10.500L19 7v15H2V13" fill="#fff" /><path d="M12.500.800V7H19" /><circle cx="3.500" cy="9" r="2.300" fill={B} stroke={S} /><path d="M8.500 10.500H15M5 14.500h8" stroke="#3a96dd" strokeWidth="1.300" /></g>,
  <g><path d="M5 3H1q0 8 6 9M18 3h4q0 8-6 9" /><path d="M5 1.500h13V8q0 7-6.500 7T5 8zM10 15v4h3v-4" fill="#fff" strokeWidth="1.500" /><path d="M5 1h13v2.500H5zM6 19h11v3H6z" fill={B} stroke={S} /></g>,
  <g><path d="M2.800 0H13L19.800 7v15.500h-17z" fill="#fff" strokeWidth="1.600" /><path d="M13 0V7.200h7" /><path d="M5.500 13h3v7h-3zM10.500 16h3v4h-3zM15 10.500h3V20h-3z" fill={D} stroke="none" /></g>,
  <g><path d="M9 3.500h13.200V20H.800V14" strokeWidth="1.600" fill="#fff" /><Num x={5} y={15.5} size={11} /><path d="M3 18h17" stroke={G} /><Bolt x={0} y={-1.5} k={0.62} /></g>,
  <g><SlicerBase /><path d="M-1-1h8l2 4-5 9h-5z" fill={BG} stroke="none" /><Bolt x={0} y={-1.5} k={0.62} /></g>,
  <g><R x={1} y={1} w={21} h={21} f="#cfe6f7" s={S} /><path d="M12 1c-1 5 5 3 4 7s-8 3-7 8-4 3-4 6H1V1zM22 5c-4 0-3 5-6 7s0 5-2 10" fill={B} stroke={S} strokeWidth="1.200" /><path d="M-1-1h9v10l-4 4.500-5-4.500z" fill={OR} stroke="none" /><circle cx="3.500" cy="4" r="1.800" fill="#fff" stroke="none" /><circle cx="20" cy="19.500" r="3.300" fill={OR} stroke="#fff" strokeWidth="1" /><circle cx="21.500" cy="13" r="2" fill={OR} stroke="none" /></g>,
  <g stroke="#8c3fa0" strokeWidth="1.400" strokeLinejoin="round"><path d="M9 1.500h5l8 9.500-8 10H9L1 11zM9 1.500l8 9.500-6 8M14 1.500 6.500 11l7.500 10M11.500 5l5.500 6-5.500 6L6.500 11z" /></g>,
  <g stroke="#2384d8" strokeWidth="1.600" strokeLinejoin="round"><path d="M1 1.500h13.500l7.500 9.500-7.500 9.500H1L9 11z" fill="#fff" /><path d="M8 1.500 15 11l-8 9.500M9 11h6M1 20.500 14.500 5" /></g>,
];

function Visualizations() {
  return (
    <Panel $w={226}>
      <PanelHead $r={9}><Text $size={18.6} $weight={600} $ls={0.07}>Visualizations</Text><Chevrons /></PanelHead>
      <SubTitle><Text $weight={500} $ls={0.25}>Build visual</Text></SubTitle>
      <ModeRow>
        <ModeButton $active>
          <Svg w={30}>
            <path d="M0 1.500h24" stroke={INK} strokeWidth="1.800" />
            <rect x="1" y="8" width="28" height="8.500" fill={TEAL} stroke={INK} strokeWidth="2" strokeDasharray="2.500 1.500" />
            <rect x="1" y="21" width="28" height="8" fill={TEAL} stroke={INK} strokeWidth="2" strokeDasharray="2.500 1.500" />
          </Svg>
        </ModeButton>
        <ModeButton>
          <Svg w={32} strokeWidth="1.500" stroke={INK}>
            <path d="M4 29.500H1.500V1h12l9 9v2M13.500 1v9h9" />
            <path d="M30.500 12C27 12 18 21 17 24l2.500 2.500C23 25 31 16 30.500 12z" fill={BG} />
            <path d="M16.500 23.500c-4 0-4 4.500-7.500 5.500 4 1.500 9.500.500 10.500-2.500z" />
          </Svg>
        </ModeButton>
      </ModeRow>
      <Svg w={225} h={16} stroke="#8a8886" strokeWidth="1.300">
        <path d="M0 15.300h20.500L30 6l9.500 9.300H225" />
      </Svg>
      <IconGrid>
        {VIZ.map((v, i) => <Svg key={i} w={23} overflow="visible">{v}</Svg>)}
      </IconGrid>
      <MoreRow><Dots w={18} r={1.2} /></MoreRow>
      <WellLabel $h={37} $pt={4}><Text $color="#3b3a39" $ls={0.1}>Values</Text></WellLabel>
      <DashedWell $h={35} $pl={13}><Text $ls={0.09}>Add data fields here</Text></DashedWell>
      <WellLabel $h={32} $mt={7}><Text $weight={600} $color="#484644" $ls={0}>Drill through</Text></WellLabel>
      <WellLabel $h={32}>
        <Text $color="#3b3a39" $ls={0.08}>Cross-report</Text>
        <Toggle><Knob /><Text $size={11} $color="#605e5c">Off</Text></Toggle>
      </WellLabel>
      <WellLabel $h={35}>
        <Text $color="#3b3a39" $ls={0.08}>Keep all filters</Text>
        <Toggle $on><Knob $on /><Text $size={11} $color="#fff">On</Text></Toggle>
      </WellLabel>
      <DashedWell $h={32} $pl={10} $mt={6}><Text $ls={0.15}>Add drill-through fields here</Text></DashedWell>
    </Panel>
  );
}

/* ---------- data pane ---------- */

const DataSearch = styled.div`
  display: flex;
  align-items: center;
  gap: 9px;
  height: 30px;
  margin: 11px 2px 0 5px;
  padding: 1px 0 0 14px;
  background: #fff;
  border: 1px solid #d2d0ce;
  border-bottom-color: #605e5c;
  border-radius: 5px;
`;

const Tree = styled.div`
  padding-top: 11px;
`;

const TreeRow = styled.div`
  display: flex;
  align-items: center;
  height: 30px;
  padding-left: ${(p) => (p.$child ? 37 : 15)}px;
`;

const Slot = styled.span`
  display: flex;
  align-items: center;
  width: ${(p) => p.$w}px;
  padding-left: ${(p) => p.$pl || 0}px;
  flex: none;
`;

const Checkbox = styled.span`
  width: 15px;
  height: 15px;
  margin-right: 10px;
  border: 1px solid #797775;
  border-radius: 2px;
  background: #f8f7f6;
  flex: none;
`;

const Chev = ({ open }) => open
  ? <Svg w={15} h={8} stroke="#605e5c" strokeWidth="1.200"><path d="M.500.500 7.500 7.500l7-7" /></Svg>
  : <Svg w={9} h={15} stroke="#605e5c" strokeWidth="1.200"><path d="M.500.500 8 7.500l-7.500 7" /></Svg>;

const TableIcon = () => (
  <Svg w={16} strokeWidth="1.500" stroke="#323130"><rect x=".8" y=".8" width="14.400" height="14.400" rx="2.500" /><path d="M5.500 1v14M10.500 1v14M1 5h14M1 10.800h14" /></Svg>
);

const FIELD_ICONS = {
  sum: <path d="M14 1H2l6.500 7L2 15h12" strokeWidth="1.500" />,
  date: (
    <g><rect x="1" y=".8" width="14" height="14.400" rx="2.500" /><path d="M1 4.500h14" strokeWidth="1.800" /><g fill={D} stroke="none">{[[5, 8.5], [8, 8.5], [11, 8.5], [5, 11.5], [8, 11.5]].map(([x, y]) => <circle key={`${x}-${y}`} cx={x} cy={y} r="1" />)}</g></g>
  ),
  calc: (
    <g><path d="M8 15H3.500Q1 15 1 12.500v-9Q1 1 3.500 1h9Q15 1 15 3.500V7M5 1v14M10 1v4.500H5M5 5.500h10M5 10.500h4" /><path d="M17.500 8.500H10l4 4.200-4 4.100h7.500" strokeWidth="1.600" /></g>
  ),
};

const TREE = [
  { t: "apps", table: true, open: true },
  { t: "description" }, { t: "developer" }, { t: "id" },
  { t: "lastmod", icon: "date", exp: true },
  { t: "pricing_hint" },
  { t: "rating", icon: "sum" }, { t: "reviews_count", icon: "sum" },
  { t: "tagline" },
  { t: "apps_categories", table: true },
  { t: "categories", table: true },
  { t: "reviews", table: true, open: true },
  { t: "app_id" }, { t: "author" }, { t: "body" },
  { t: "developer_ans...", icon: "calc" },
  { t: "developer_reply" },
  { t: "developer_reply...", icon: "date", exp: true },
  { t: "helpful_count", icon: "sum" },
  { t: "helpful_reviews", icon: "calc" },
  { t: "posted_at" },
  { t: "rating", icon: "sum" },
];

function DataPane() {
  return (
    <Panel $w={223}>
      <PanelHead $r={7}><Text $size={18.6} $weight={600}>Data</Text><Chevrons /></PanelHead>
      <DataSearch>
        <Svg w={19} stroke="#605e5c" strokeWidth="1.300"><circle cx="7.500" cy="7.500" r="6.300" /><path d="M12 12l6 6" /></Svg>
        <Text $size={15.6} $ls={0.1} $color="#797775">Search</Text>
      </DataSearch>
      <Tree>
        {TREE.map((n, i) => n.table ? (
          <TreeRow key={i}>
            <Slot $w={21} $pl={n.open ? 1 : 3}><Chev open={n.open} /></Slot>
            <Slot $w={23}><TableIcon /></Slot>
            <Text $color="#323130">{n.t}</Text>
          </TreeRow>
        ) : (
          <TreeRow key={i} $child>
            <Slot $w={18}>{n.exp && <Chev />}</Slot>
            <Checkbox />
            <Slot $w={23}>{n.icon && <Svg w={16} strokeWidth="1.400" stroke="#323130" overflow="visible">{FIELD_ICONS[n.icon]}</Svg>}</Slot>
            <Text $color="#323130">{n.t}</Text>
          </TreeRow>
        ))}
      </Tree>
    </Panel>
  );
}

/* ---------- status bar ---------- */

const StatusBar = styled.footer`
  display: flex;
  align-items: center;
  flex: 1;
  padding: 4px 19px 0 5px;
  border-top: 1px solid #d8d6d4;
`;

const Zoom = styled.div`
  display: flex;
  align-items: center;
  margin-left: auto;
`;

export default function App() {
  return (
    <Page>
      <Global />
      <TitleStrip />
      <RibbonBar />
      <Main>
        <ViewRail />
        <Center>
          <InfoBar>
            <Svg w={20} strokeWidth="1.300"><circle cx="10" cy="10" r="9" /><path d="M10 8.500V14M10 5.500V7" /></Svg>
            <Text $ls={0.09} $ml={11}>Auto recovery contains some recovered files that haven't been opened.</Text>
            <OutlineButton>View recovered files</OutlineButton>
            <Svg w={16} strokeWidth="1.300"><path d="M1 1l14 14M15 1 1 15" /></Svg>
          </InfoBar>
          <Work>
            <Canvas>
              <PageEdge />
              <ScatterVisual>
                <ChartTitle>Total Reviews and Cumulative Ratings by App</ChartTitle>
                <Scatter />
              </ScatterVisual>
              <Narrative>{`The scatterplot shows that most Shopify apps have
a high average rating, with many clustered between
3.5 and 5 stars, indicating overall positive user
feedback. Apps with higher review counts tend to
maintain these high ratings, suggesting that
popularity correlates with quality. However, there is
greater variability in ratings among apps with fewer
reviews, which could reflect inconsistent user
experiences. A few outliers with high review counts
but lower ratings suggest specific issues despite
their popularity.`}</Narrative>
              <ScrollThumb $vertical />
              <ScrollThumb />
            </Canvas>
            <Filters />
          </Work>
          <PageTabs />
        </Center>
        <Collapsed>
          <Chevrons left />
          <VerticalTitle>Quick measure</VerticalTitle>
        </Collapsed>
        <Visualizations />
        <DataPane />
      </Main>
      <StatusBar>
        <Text $color="#484644" $ls={0.17}>Page 1 of 3</Text>
        <Zoom>
          <Svg w={243} h={18} stroke="#605e5c">
            <path d="M0 8.500h6" strokeWidth="2" />
            <path d="M12 8.500h126" strokeWidth="1.400" />
            <rect x="74" y="2.500" width="5" height="13" fill="#605e5c" stroke="none" />
            <path d="M144 8.500h10M149 3.500v10" strokeWidth="2" />
            <text x="171" y="13.500" fontSize="14" fontFamily={UI} fill="#605e5c" stroke="none" textLength="36">110%</text>
            <rect x="223" y="1.700" width="19" height="14" strokeWidth="1.700" />
            <path d="M226.500 7V4.500h3M235.500 4.500h3V7M238.500 10.500V13h-3M229.500 13h-3v-2.500" />
          </Svg>
        </Zoom>
      </StatusBar>
    </Page>
  );
}
